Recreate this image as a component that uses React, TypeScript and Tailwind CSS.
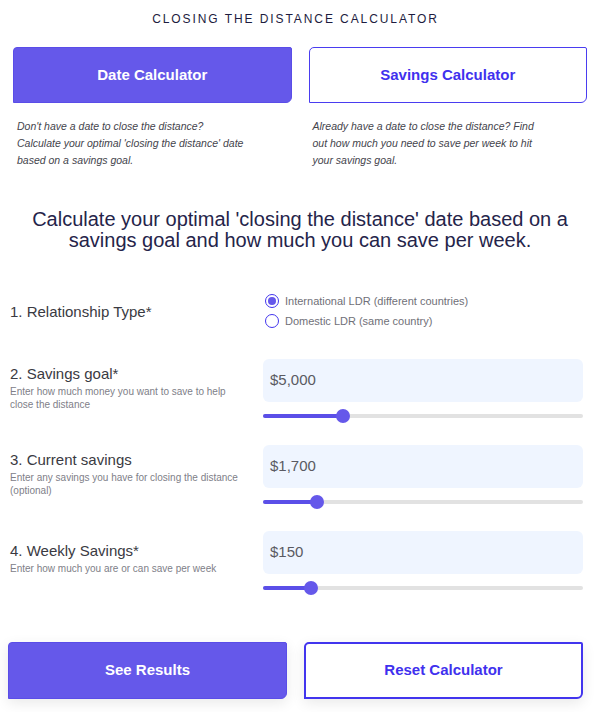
import React, { useState } from 'react';

type Field = {
  label: string;
  hint: React.ReactNode;
  value: number;
  max: number;
  pad: string;
};

const money = (n: number) => '$' + n.toLocaleString('en-US');

const Slider: React.FC<{ pct: number }> = ({ pct }) => (
  <div className="relative mt-[7px] h-[14px]">
    <div className="absolute left-0 right-0 top-[5px] h-[4px] rounded-full bg-[#e2e2e2]" />
    <div className="absolute left-0 top-[5px] h-[4px] rounded-full bg-[#5b4fe8]" style={{ width: `${pct}%` }} />
    <div className="absolute top-0 -ml-[7px] h-[14px] w-[14px] rounded-full bg-[#6558ea]" style={{ left: `${pct}%` }} />
  </div>
);

const Radio: React.FC<{ checked: boolean; label: string; onClick: () => void }> = ({ checked, label, onClick }) => (
  <button onClick={onClick} className="flex h-[20px] items-center gap-[6px] text-left">
    <span className="flex h-[14px] w-[14px] items-center justify-center rounded-full border-[1.5px] border-[#4235ee] bg-white">
      {checked && <span className="h-[8px] w-[8px] rounded-full bg-[#6558ea]" />}
    </span>
    <span className="text-[11px] leading-[14px] text-[#707078]">{label}</span>
  </button>
);

const App: React.FC = () => {
  const [mode, setMode] = useState<'date' | 'savings'>('date');
  const [ldr, setLdr] = useState<'intl' | 'domestic'>('intl');

  const fields: Field[] = [
    {
      label: '2. Savings goal*',
      hint: (
        <>
          Enter how much money you want to save to help
          <br />
          close the distance
        </>
      ),
      value: 5000,
      max: 20000,
      pad: 'pt-[5px]',
    },
    {
      label: '3. Current savings',
      hint: (
        <>
          Enter any savings you have for closing the distance
          <br />
          (optional)
        </>
      ),
      value: 1700,
      max: 10000,
      pad: 'pt-[5px]',
    },
    {
      label: '4. Weekly Savings*',
      hint: 'Enter how much you are or can save per week',
      value: 150,
      max: 1000,
      pad: 'pt-[10px]',
    },
  ];

  const tab = (active: boolean) =>
    active
      ? 'bg-[#6558ea] border-[1.5px] border-[#5a4de8] text-white'
      : 'bg-white border-[1.5px] border-[#4a3df0] text-[#3f31ee]';

  return (
    <div className="h-[712px] w-[600px] overflow-hidden bg-white font-['Liberation_Sans',Arial,sans-serif]">
      <h1 className="pr-[9px] pt-[11px] text-center text-[12px] leading-[16px] tracking-[0.16em] text-[#1d1c40]">
        CLOSING THE DISTANCE CALCULATOR
      </h1>

      <div className="mt-[20px] grid grid-cols-2 gap-x-[17px] px-[13px]">
        <button
          onClick={() => setMode('date')}
          className={`h-[56px] rounded-tl-[4px] rounded-tr-[2px] rounded-br-[6px] text-[15px] font-bold ${tab(mode === 'date')}`}
        >
          Date Calculator
        </button>
        <button
          onClick={() => setMode('savings')}
          className={`h-[56px] rounded-tl-[5px] rounded-tr-[2px] rounded-br-[6px] text-[15px] font-bold ${tab(mode === 'savings')}`}
        >
          Savings Calculator
        </button>
        <p className="mt-[15px] pl-[4px] text-[10.5px] italic leading-[17px] text-[#44444c]">
          Don't have a date to close the distance?
          <br />
          Calculate your optimal 'closing the distance' date
          <br />
          based on a savings goal.
        </p>
        <p className="mt-[15px] pl-[4px] text-[10.5px] italic leading-[17px] text-[#44444c]">
          Already have a date to close the distance? Find
          <br />
          out how much you need to save per week to hit
          <br />
          your savings goal.
        </p>
      </div>

      <h2 className="mt-[40px] text-center text-[20px] leading-[21px] text-[#25244a]">
        Calculate your optimal 'closing the distance' date based on a
        <br />
        savings goal and how much you can save per week.
      </h2>

      <div className="pl-[10px] pr-[17px]">
        <div className="mt-[40px] flex items-center">
          <div className="w-[253px] pt-[2px] text-[15px] leading-[20px] text-[#3a3a42]">1. Relationship Type*</div>
          <div className="flex flex-col pl-[2px]">
            <Radio checked={ldr === 'intl'} label="International LDR (different countries)" onClick={() => setLdr('intl')} />
            <Radio checked={ldr === 'domestic'} label="Domestic LDR (same country)" onClick={() => setLdr('domestic')} />
          </div>
        </div>

        <div className="mt-[28px] flex flex-col gap-[22px]">
          {fields.map((f) => (
            <div key={f.label} className="flex">
              <div className={`w-[253px] ${f.pad}`}>
                <div className="text-[15px] leading-[20px] text-[#3a3a42]">{f.label}</div>
                <div className="mt-[1px] text-[10px] leading-[13px] text-[#808088]">{f.hint}</div>
              </div>
              <div className="flex-1">
                <div className="flex h-[43px] items-center rounded-[6px] bg-[#eff5ff] pl-[7px] text-[15px] text-[#5a5a62]">
                  {money(f.value)}
                </div>
                <Slider pct={(f.value / f.max) * 100} />
              </div>
            </div>
          ))}
        </div>
      </div>

      <div className="mt-[47px] grid grid-cols-2 gap-x-[17px] pl-[8px] pr-[17px]">
        <button className="h-[57px] rounded-tl-[4px] rounded-tr-[2px] rounded-br-[6px] border-[1.5px] border-[#5a4de8] bg-[#6558ea] text-[15px] font-bold text-white shadow-[0_4px_14px_rgba(0,0,0,0.09)]">
          See Results
        </button>
        <button className="h-[57px] rounded-tl-[5px] rounded-tr-[2px] rounded-br-[6px] border-2 border-[#4235ee] bg-white text-[15px] font-bold text-[#3f31ee] shadow-[0_4px_14px_rgba(0,0,0,0.09)]">
          Reset Calculator
        </button>
      </div>
    </div>
  );
};

export default App;
